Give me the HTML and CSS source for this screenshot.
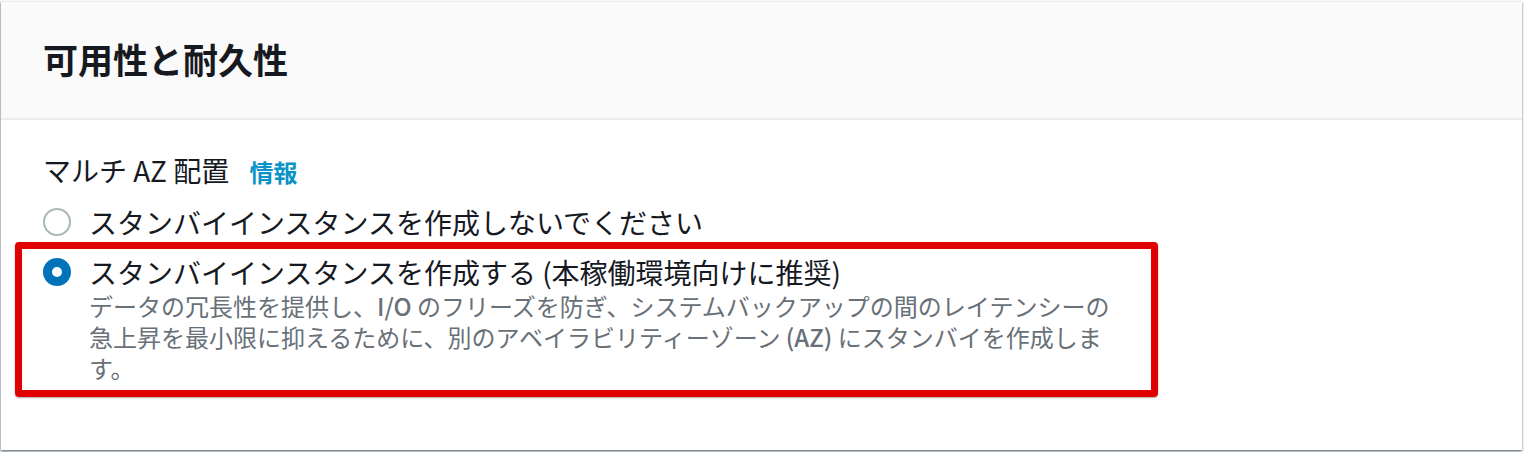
FILE: index.html
```html
<!DOCTYPE html>
<html lang="ja">
<head>
    <meta charset="UTF-8">
    <meta name="viewport" content="width=device-width, initial-scale=1.0">
    <title>可用性と耐久性</title>
    <link rel="stylesheet" href="styles.css">
</head>
<body>
    <div class="card">
        <div class="card-header">
            <h2>可用性と耐久性</h2>
        </div>

        <div class="card-body">
            <div class="field-label">
                マルチ AZ 配置 <a href="#" class="info">情報</a>
            </div>

            <label class="option">
                <span class="radio"></span>
                <span class="option-text">スタンバイインスタンスを作成しないでください</span>
            </label>

            <label class="option highlight">
                <span class="radio checked"></span>
                <span class="option-text">
                    スタンバイインスタンスを作成する (本稼働環境向けに推奨)
                    <span class="desc">データの冗長性を提供し、<b>I/O</b> のフリーズを防ぎ、システムバックアップの間のレイテンシーの急上昇を最小限に抑えるために、別のアベイラビリティーゾーン <b>(AZ)</b> にスタンバイを作成します。</span>
                </span>
            </label>
        </div>
    </div>
</body>
</html>
```

FILE: styles.css
```css
body {
    margin: 0;
    padding: 0;
    background-color: #ffffff;
    font-family: "Noto Sans CJK JP", "Noto Sans", sans-serif;
    color: #16191f;
}

.card {
    margin: 1px 2px 3px 1px;
    background-color: #ffffff;
    border-top: 1px solid #eaeded;
    box-shadow: 0 2px 2px 0 rgba(0, 28, 36, 0.3), 1px 1px 2px 0 rgba(0, 28, 36, 0.15), -1px 1px 2px 0 rgba(0, 28, 36, 0.3);
}

.card-header {
    background-color: #fafafa;
    border-bottom: 2px solid #eaeded;
    padding: 36px 42px 39px;
}

.card-header h2 {
    margin: 0;
    font-size: 35px;
    line-height: 41px;
    font-weight: bold;
}

.card-body {
    padding: 32px 42px 67px;
}

.field-label {
    font-size: 28px;
    line-height: 36px;
    margin-bottom: 14px;
}

.info {
    margin-left: 14px;
    font-size: 24px;
    font-weight: bold;
    color: #0a93c6;
    text-decoration: none;
}

.option {
    display: flex;
    align-items: flex-start;
    gap: 18px;
    font-size: 28px;
    line-height: 36px;
    margin-bottom: 14px;
}

.radio {
    flex: none;
    width: 28px;
    height: 28px;
    margin-top: 4px;
    border: 2px solid #aab7b8;
    border-radius: 50%;
    box-sizing: border-box;
}

.radio.checked {
    border: 9px solid #0073bb;
    background-color: #ffffff;
}

.option-text {
    display: block;
}

.desc {
    display: block;
    max-width: 1026px;
    font-size: 24px;
    line-height: 31px;
    color: #687078;
}

.desc b {
    font-weight: 500;
}

.highlight {
    position: relative;
    margin-bottom: 0;
}

.highlight::after {
    content: "";
    position: absolute;
    left: -28px;
    top: -12px;
    width: 1143px;
    height: 155px;
    box-sizing: border-box;
    border: 7px solid #e00000;
    border-radius: 4px;
    box-shadow: 0 1px 2px rgba(0, 0, 0, 0.35);
}
```
